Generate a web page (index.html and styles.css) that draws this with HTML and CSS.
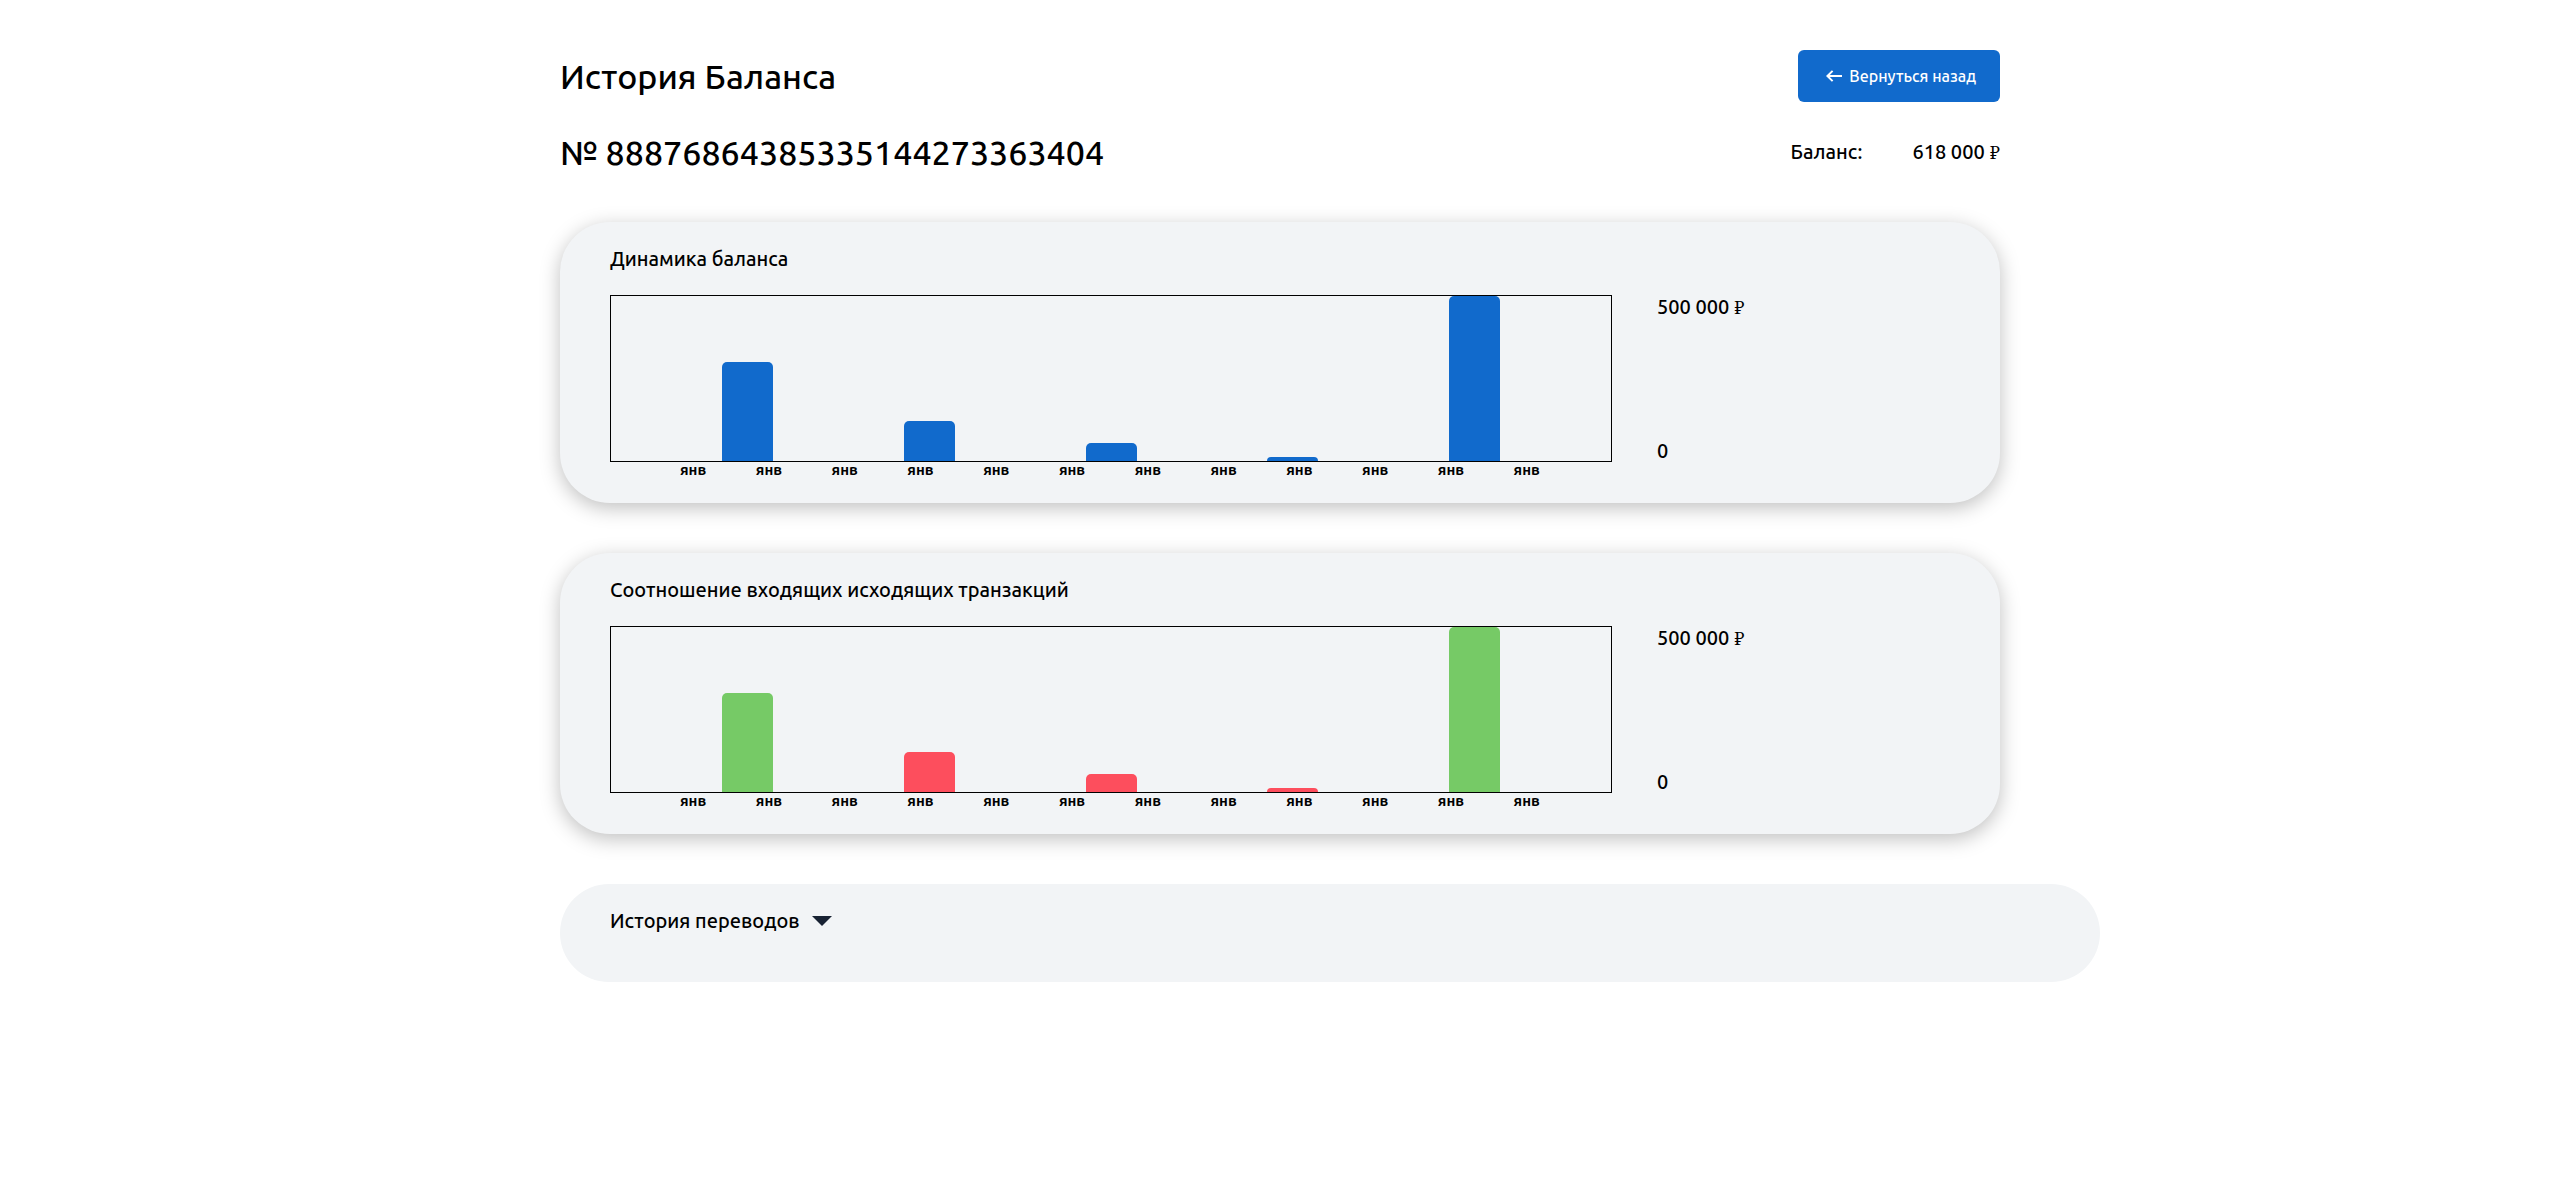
FILE: index.html
```html
<!DOCTYPE html>
<html lang="ru">
<head>
  <meta charset="utf-8">
  <meta name="viewport" content="width=device-width, initial-scale=1">
  <title>История Баланса</title>
  <link rel="stylesheet" href="styles.css">
</head>
<body>
  <main class="container">
    <header class="head">
      <div class="head__row">
        <h1 class="head__title">История Баланса</h1>
        <button class="back" type="button">
          <svg class="back__icon" viewBox="0 0 16 12" width="16" height="12" aria-hidden="true">
            <path d="M6.6 0.9 1.4 6l5.2 5.1M1.6 6H16" fill="none" stroke="currentColor" stroke-width="2"/>
          </svg>
          Вернуться назад
        </button>
      </div>
      <div class="head__row">
        <h2 class="head__title">№ 88876864385335144273363404</h2>
        <p class="balance"><span>Баланс:</span><span>618 000 <span class="ruble">₽</span></span></p>
      </div>
    </header>

    <section class="card card--chart">
      <h3 class="card__title">Динамика баланса</h3>
      <div class="chart">
        <div class="chart__plot">
          <div class="bar" style="height: 60%"></div>
          <div class="bar" style="height: 24%"></div>
          <div class="bar" style="height: 11%"></div>
          <div class="bar" style="height: 2.4%"></div>
          <div class="bar" style="height: 100%"></div>
        </div>
        <div class="chart__scale">
          <span>500 000 <span class="ruble">₽</span></span>
          <span>0</span>
        </div>
        <ul class="chart__months">
          <li>янв</li><li>янв</li><li>янв</li><li>янв</li><li>янв</li><li>янв</li>
          <li>янв</li><li>янв</li><li>янв</li><li>янв</li><li>янв</li><li>янв</li>
        </ul>
      </div>
    </section>

    <section class="card card--chart">
      <h3 class="card__title">Соотношение входящих исходящих транзакций</h3>
      <div class="chart">
        <div class="chart__plot">
          <div class="bar bar--in" style="height: 60%"></div>
          <div class="bar bar--out" style="height: 24%"></div>
          <div class="bar bar--out" style="height: 11%"></div>
          <div class="bar bar--out" style="height: 2.4%"></div>
          <div class="bar bar--in" style="height: 100%"></div>
        </div>
        <div class="chart__scale">
          <span>500 000 <span class="ruble">₽</span></span>
          <span>0</span>
        </div>
        <ul class="chart__months">
          <li>янв</li><li>янв</li><li>янв</li><li>янв</li><li>янв</li><li>янв</li>
          <li>янв</li><li>янв</li><li>янв</li><li>янв</li><li>янв</li><li>янв</li>
        </ul>
      </div>
    </section>

    <section class="card card--history">
      <button class="history" type="button" aria-expanded="false">
        История переводов
        <svg class="history__icon" viewBox="0 0 20 10" width="20" height="10" aria-hidden="true">
          <path d="M0 0h20L10 10z" fill="#182233"/>
        </svg>
      </button>
    </section>
  </main>
</body>
</html>
```
FILE: styles.css
```css
*,
*::before,
*::after {
  box-sizing: border-box;
}

body {
  margin: 0;
  padding: 50px 0 50px 3px;
  background: #fff;
  color: #000;
  font: 500 20px/23px Ubuntu, "Open Sans", sans-serif;
}

h1,
h2,
h3,
p,
ul {
  margin: 0;
  padding: 0;
}

.container {
  max-width: 1440px;
  margin: 0 auto;
}

.head {
  display: flex;
  flex-direction: column;
  gap: 30px;
  margin-bottom: 50px;
}

.head__row {
  display: flex;
  align-items: center;
  justify-content: space-between;
}

.head__title {
  font-size: 34px;
  font-weight: 500;
  line-height: 40px;
}

.back {
  display: flex;
  align-items: center;
  gap: 7px;
  height: 52px;
  padding: 0 24px 0 28px;
  border: 0;
  border-radius: 6px;
  background: #116acc;
  color: #fff;
  font: inherit;
  font-size: 16px;
  cursor: pointer;
}

.balance {
  display: flex;
  gap: 50px;
  line-height: 24px;
}

.ruble {
  font-family: "Noto Serif", "DejaVu Serif", serif;
  font-size: 18px;
  font-weight: 400;
  line-height: 1;
}

.card {
  border-radius: 50px;
  background: #f2f4f6;
  padding: 25px 50px;
}

.card--chart {
  margin-bottom: 50px;
  box-shadow: 0 5px 20px rgba(0, 0, 0, 0.25);
}

.card__title {
  margin-bottom: 25px;
  font-size: 20px;
  font-weight: 500;
}

.chart {
  display: grid;
  grid-template-columns: minmax(0, 1002px) 1fr;
  column-gap: 45px;
}

.chart__plot {
  display: flex;
  align-items: flex-end;
  justify-content: space-between;
  height: 167px;
  padding: 0 111px;
  border: 1px solid #000;
}

.bar {
  width: 51px;
  border-radius: 5px 5px 0 0;
  background: #116acc;
}

.bar--in {
  background: #76ca66;
}

.bar--out {
  background: #fd4e5d;
}

.chart__scale {
  display: flex;
  flex-direction: column;
  justify-content: space-between;
}

.chart__months {
  display: flex;
  justify-content: space-between;
  padding: 0 72px 0 70px;
  list-style: none;
  font-size: 15px;
  font-weight: 700;
  line-height: 16px;
}

.card--history {
  min-height: 98px;
  margin-right: -100px;
}

.history {
  display: flex;
  align-items: center;
  gap: 12px;
  padding: 0;
  border: 0;
  background: none;
  color: inherit;
  font: inherit;
  cursor: pointer;
}
```
